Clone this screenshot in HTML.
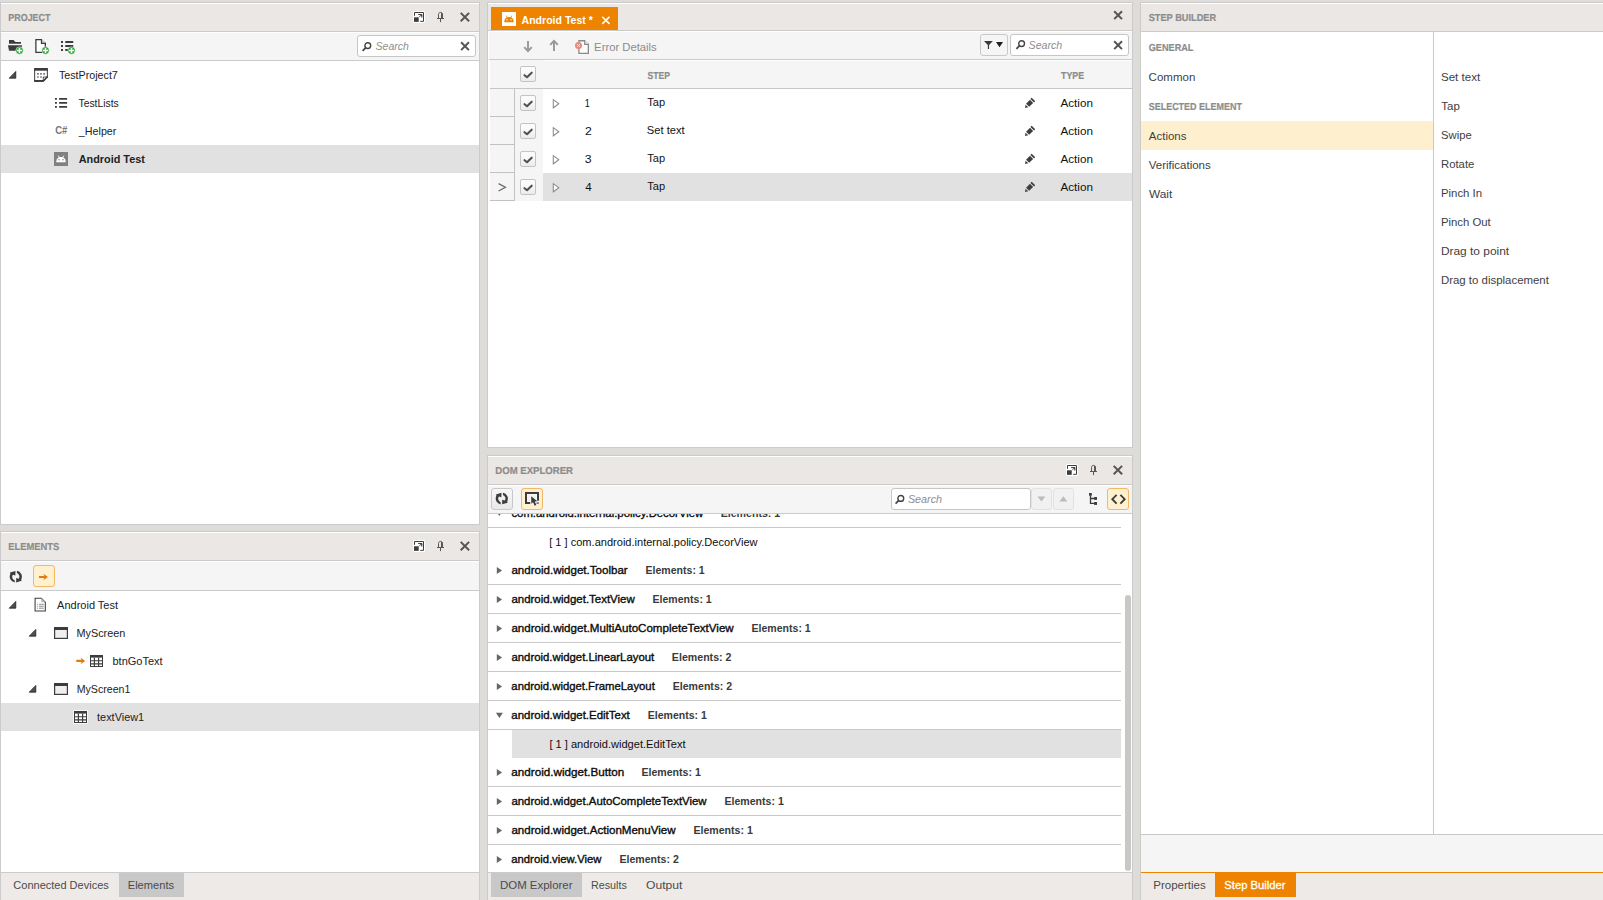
<!DOCTYPE html>
<html lang="en"><head><meta charset="utf-8"><title>Test Studio - Android Test</title>
<style>
html,body{margin:0;padding:0}
body{width:1603px;height:900px;overflow:hidden;position:relative;background:#dedcd8;font-family:"Liberation Sans", sans-serif;font-size:11px;color:#222}
div,svg,span.t{position:absolute;box-sizing:border-box}
span.t{white-space:pre;line-height:14px;transform-origin:0 50%;display:block}
.panel{background:#fff;border:1px solid #cbcbcb}
.hdr{background:#ebe7e4;border-top:1px solid #fff;border-bottom:1px solid #cbcbcb}
.tb{background:#f5f5f5;border-top:1px solid #fff;border-bottom:1px solid #cbcbcb}
.sel{background:#e1e1e1}
.search{background:#fff;border:1px solid #c6c6c6;border-radius:3px}
.btn{border:1px solid #c8c8c8;border-radius:3px;background:linear-gradient(#f7f7f7,#e9e9e9)}
.btno{border:1px solid #f3b765;border-radius:3px;background:#fff0cf}
.cb{border:1px solid #c4c4c4;border-radius:2px;background:linear-gradient(#fbfbfb 30%,#ebebeb)}
.ln{background:#cbcbcb}
</style></head>
<body>
<div class="panel" style="left:0px;top:2px;width:480px;height:523px;"></div>
<div class="hdr" style="left:1px;top:3px;width:478px;height:29px;"></div>
<span class="t" style="font-size:10.2px;font-weight:bold;color:#8c8c8c;text-rendering:geometricPrecision;-webkit-text-stroke:0.2px #8c8c8c;left:8px;top:12.25px;transform:translateX(0.37px) scaleX(0.8729);">PROJECT</span>
<svg style="left:413px;top:11px;" width="12" height="12" viewBox="0.000 0.000 12.000 12.000" preserveAspectRatio="none"><rect x="0" y="0" width="12" height="12" rx="1.6" fill="#fff"/><path d="M1.5 4.8V1.5H10.5V10.35H7.2" fill="none" stroke="#3c3c3c" stroke-width="1"/><rect x="1" y="6.3" width="4.7" height="4.55" fill="#3c3c3c"/><path d="M5.1 3.55H8.8V6.6" fill="none" stroke="#3c3c3c" stroke-width="1"/><path d="M6.5 3.2H9.1V5.8Z" fill="#3c3c3c"/><path d="M8.4 3.9L6 6.3" stroke="#555" stroke-width="0.9"/></svg>
<svg style="left:436px;top:11px;" width="9" height="12" viewBox="-0.500 -0.500 9.000 12.000" preserveAspectRatio="none"><path d="M2 7V3.2C2 1.6 2.9 0.85 4 0.85C5.1 0.85 6 1.6 6 3.2V7" fill="none" stroke="#585858" stroke-width="1"/><path d="M4.5 0.9C5.7 1.1 6.5 1.9 6.5 3.2V7H4.5Z" fill="#585858"/><path d="M0.5 7H7.5M4 7V10.6" fill="none" stroke="#585858" stroke-width="1"/></svg>
<svg style="left:460px;top:12px;" width="10" height="10" viewBox="0.000 -0.200 10.000 10.000" preserveAspectRatio="none"><path d="M0.7 0.7L9.100000000000001 9.100000000000001M9.100000000000001 0.7L0.7 9.100000000000001" stroke="#555" stroke-width="2.0" fill="none"/></svg>
<div class="tb" style="left:1px;top:32px;width:478px;height:29px;"></div>
<svg style="left:8px;top:39px;" width="16" height="16" viewBox="0.000 0.000 16.000 16.000" preserveAspectRatio="none"><path d="M1 1H5.5L7.5 3H13V4.75H1Z" fill="#3c3c3c"/><path d="M0 6.25H14L13 11.8H1Z" fill="#3c3c3c"/><circle cx="11.5" cy="11.5" r="3.7" fill="#2aa838" stroke="#f5f5f5" stroke-width="0.5"/><path d="M8.9 11.5H14.1M11.5 8.9V14.1" stroke="#fff" stroke-width="1.5"/></svg>
<svg style="left:34px;top:38px;" width="17" height="17" viewBox="0.000 0.000 17.000 17.000" preserveAspectRatio="none"><path d="M1.9 1.65H7.5V5.25H11.35V14.35H1.9Z" fill="#fff" stroke="#3c3c3c" stroke-width="1.3"/><path d="M8.15 1.4L11.8 4.6H8.15Z" fill="#c2c2c2"/><circle cx="11.5" cy="12.5" r="3.7" fill="#2aa838" stroke="#f5f5f5" stroke-width="0.5"/><path d="M8.9 12.5H14.1M11.5 9.9V15.1" stroke="#fff" stroke-width="1.5"/></svg>
<svg style="left:61px;top:40px;" width="16" height="16" viewBox="0.000 0.000 16.000 16.000" preserveAspectRatio="none"><path d="M0 2H2M0 6H2M0 10H2" stroke="#3c3c3c" stroke-width="1.9"/><path d="M4.25 2H12.25M4.25 6H12.25M4.25 10H9" stroke="#3c3c3c" stroke-width="1.9"/><circle cx="10.5" cy="10.5" r="3.7" fill="#2aa838" stroke="#f5f5f5" stroke-width="0.5"/><path d="M7.9 10.5H13.1M10.5 7.9V13.1" stroke="#fff" stroke-width="1.5"/></svg>
<div class="search" style="left:357px;top:35px;width:119px;height:22px;"></div>
<svg style="left:361px;top:41px;" width="11" height="11" viewBox="-0.900 -0.900 11.000 11.000" preserveAspectRatio="none"><circle cx="5.9" cy="3.7" r="2.9" fill="none" stroke="#444" stroke-width="1.4"/><path d="M3.9 5.7L0.7 8.9" stroke="#444" stroke-width="1.7"/></svg>
<span class="t" style="font-size:11.5px;font-weight:normal;color:#8e8e8e;font-style:italic;left:375px;top:39.25px;transform:translateX(0.62px) scaleX(0.9119);">Search</span>
<svg style="left:460px;top:41px;" width="10" height="10" viewBox="-0.400 -0.600 10.000 10.000" preserveAspectRatio="none"><path d="M0.7 0.7L8.5 8.5M8.5 0.7L0.7 8.5" stroke="#555" stroke-width="2.0" fill="none"/></svg>
<svg style="left:8px;top:70px;" width="9" height="9" viewBox="-0.600 -0.900 9.000 9.000" preserveAspectRatio="none"><path d="M7.2 0.5V7.3H0.6Z" fill="#4e4e4e" stroke="#161616" stroke-width="0.7" stroke-linejoin="miter"/></svg>
<svg style="left:34px;top:68px;" width="14" height="14" viewBox="0.000 0.000 14.000 14.000" preserveAspectRatio="none"><path d="M0.65 1H13.35V8.6L8.9 13.1H0.65Z" fill="#fff" stroke="#3c3c3c" stroke-width="1"/><rect x="0.15" y="0" width="13.7" height="2.7" fill="#3c3c3c"/><rect x="0.15" y="12" width="9" height="1.9" fill="#3c3c3c"/><path d="M9.3 13.2V9H13.4Z" fill="#fff" stroke="#3c3c3c" stroke-width="0.9"/><path d="M8.9 13.5L13.7 8.6" stroke="#3c3c3c" stroke-width="1.5"/><path d="M3.1 5.9H4.7M6.2 5.9H7.8M9.3 5.9H10.9M3.1 9H4.7M6.2 9H7.8" stroke="#6e6e6e" stroke-width="1.6"/></svg>
<span class="t" style="font-size:11px;font-weight:normal;color:#222;left:58px;top:68.25px;transform:translateX(0.92px) scaleX(0.9730);">TestProject7</span>
<svg style="left:55px;top:97px;" width="13" height="12" viewBox="0.000 -0.900 13.000 12.000" preserveAspectRatio="none"><path d="M0 1H1.9M0 5H1.9M0 9H1.9" stroke="#3c3c3c" stroke-width="1.9"/><path d="M4.1 1H12.1M4.1 5H12.1M4.1 9H12.1" stroke="#3c3c3c" stroke-width="1.9"/></svg>
<span class="t" style="font-size:11px;font-weight:normal;color:#222;left:78px;top:96.25px;transform:translateX(0.46px) scaleX(0.9404);">TestLists</span>
<span class="t" style="font-size:10px;font-weight:bold;color:#777;left:55px;top:124.25px;transform:translateX(0.16px) scaleX(0.9472);">C#</span>
<span class="t" style="font-size:11px;font-weight:normal;color:#222;left:78px;top:124.25px;transform:translateX(0.81px) scaleX(0.9757);">_Helper</span>
<div class="sel" style="left:1px;top:145px;width:478px;height:28px;"></div>
<svg style="left:54px;top:152px;" width="14" height="14" viewBox="0.000 0.000 14.000 14.000" preserveAspectRatio="none"><rect width="14" height="14" fill="#808080"/><path d="M2.2 10.2C2.2 6.8 4.3 5.1 7 5.1C9.7 5.1 11.8 6.8 11.8 10.2Z" fill="#fff"/><path d="M4.2 3.6L5.5 6M9.8 3.6L8.5 6" stroke="#fff" stroke-width="0.9"/><circle cx="5" cy="7.8" r="0.75" fill="#808080"/><circle cx="9" cy="7.8" r="0.75" fill="#808080"/></svg>
<span class="t" style="font-size:11px;font-weight:bold;color:#222;left:78px;top:152.25px;transform:translateX(0.77px) scaleX(0.9858);">Android Test</span>
<div class="panel" style="left:0px;top:531px;width:480px;height:372px;"></div>
<div class="hdr" style="left:1px;top:532px;width:478px;height:29px;"></div>
<span class="t" style="font-size:10.2px;font-weight:bold;color:#8c8c8c;text-rendering:geometricPrecision;-webkit-text-stroke:0.2px #8c8c8c;left:8px;top:541.25px;transform:translateX(0.34px) scaleX(0.9193);">ELEMENTS</span>
<svg style="left:413px;top:540px;" width="12" height="12" viewBox="0.000 0.000 12.000 12.000" preserveAspectRatio="none"><rect x="0" y="0" width="12" height="12" rx="1.6" fill="#fff"/><path d="M1.5 4.8V1.5H10.5V10.35H7.2" fill="none" stroke="#3c3c3c" stroke-width="1"/><rect x="1" y="6.3" width="4.7" height="4.55" fill="#3c3c3c"/><path d="M5.1 3.55H8.8V6.6" fill="none" stroke="#3c3c3c" stroke-width="1"/><path d="M6.5 3.2H9.1V5.8Z" fill="#3c3c3c"/><path d="M8.4 3.9L6 6.3" stroke="#555" stroke-width="0.9"/></svg>
<svg style="left:436px;top:540px;" width="9" height="12" viewBox="-0.500 -0.500 9.000 12.000" preserveAspectRatio="none"><path d="M2 7V3.2C2 1.6 2.9 0.85 4 0.85C5.1 0.85 6 1.6 6 3.2V7" fill="none" stroke="#585858" stroke-width="1"/><path d="M4.5 0.9C5.7 1.1 6.5 1.9 6.5 3.2V7H4.5Z" fill="#585858"/><path d="M0.5 7H7.5M4 7V10.6" fill="none" stroke="#585858" stroke-width="1"/></svg>
<svg style="left:460px;top:541px;" width="10" height="10" viewBox="0.000 -0.200 10.000 10.000" preserveAspectRatio="none"><path d="M0.7 0.7L9.100000000000001 9.100000000000001M9.100000000000001 0.7L0.7 9.100000000000001" stroke="#555" stroke-width="2.0" fill="none"/></svg>
<div class="tb" style="left:1px;top:561px;width:478px;height:30px;"></div>
<svg style="left:9px;top:570px;" width="14" height="13" viewBox="-0.624 -0.520 14.560 13.520" preserveAspectRatio="none"><path d="M5.3 12.5A6.2 6.2 0 0 1 0.8 3.6L0.4 2.1L6.1 0.4L6 5.1L3.4 4.3A3.9 3.9 0 0 0 5.3 10.2Z" fill="#3c3c3c"/><path d="M5.3 12.5A6.2 6.2 0 0 1 0.8 3.6L0.4 2.1L6.1 0.4L6 5.1L3.4 4.3A3.9 3.9 0 0 0 5.3 10.2Z" fill="#3c3c3c" transform="rotate(180 6.45 6.4)"/></svg>
<div class="btno" style="left:33px;top:565px;width:22px;height:22px;"></div>
<svg style="left:38px;top:573px;" width="11" height="8" viewBox="-0.700 -0.500 11.000 8.000" preserveAspectRatio="none"><path d="M4.6 0.2L9.2 3.5L4.6 6.8L5.6 4.6H0.3V2.4H5.6Z" fill="#e8780c"/></svg>
<svg style="left:8px;top:600px;" width="9" height="9" viewBox="-0.600 -0.900 9.000 9.000" preserveAspectRatio="none"><path d="M7.2 0.5V7.3H0.6Z" fill="#4e4e4e" stroke="#161616" stroke-width="0.7" stroke-linejoin="miter"/></svg>
<svg style="left:34px;top:597px;" width="13" height="16" viewBox="-0.517 -0.616 13.448 16.438" preserveAspectRatio="none"><path d="M0.6 0.6H7L11.2 4.8V13.8H0.6Z" fill="#fff" stroke="#3c3c3c" stroke-width="1.1"/><path d="M7 0.6V4.8H11.2Z" fill="#bdbdbd"/><path d="M4.6 6.9H9.6M4.6 8.9H9.6M4.6 10.9H9.6" stroke="#8a8a8a" stroke-width="1"/><path d="M2.5 6.9H3.5M2.5 8.9H3.5M2.5 10.9H3.5" stroke="#8a8a8a" stroke-width="1"/></svg>
<span class="t" style="font-size:11px;font-weight:normal;color:#222;left:57.10px;top:598.25px;">Android Test</span>
<svg style="left:28px;top:628px;" width="9" height="9" viewBox="-0.600 -0.900 9.000 9.000" preserveAspectRatio="none"><path d="M7.2 0.5V7.3H0.6Z" fill="#4e4e4e" stroke="#161616" stroke-width="0.7" stroke-linejoin="miter"/></svg>
<svg style="left:54px;top:627px;" width="14" height="12" viewBox="0.000 0.000 14.000 12.000" preserveAspectRatio="none"><rect x="0.6" y="0.6" width="12.8" height="10.8" fill="#efeff1" stroke="#3c3c3c" stroke-width="1.2"/><rect x="0" y="0" width="14" height="3" fill="#3c3c3c"/></svg>
<span class="t" style="font-size:11px;font-weight:normal;color:#222;left:76px;top:626.25px;transform:translateX(0.52px) scaleX(0.9851);">MyScreen</span>
<svg style="left:76px;top:657px;" width="10" height="8" viewBox="0.000 -0.400 10.000 8.000" preserveAspectRatio="none"><path d="M4.6 0.2L9.2 3.5L4.6 6.8L5.6 4.6H0.3V2.4H5.6Z" fill="#e8780c"/></svg>
<svg style="left:89px;top:654px;" width="15" height="14" viewBox="-1.000 -1.000 15.000 14.000" preserveAspectRatio="none"><rect x="0.5" y="0.5" width="12" height="11" fill="#fff" stroke="#3c3c3c" stroke-width="1"/><rect x="0" y="0" width="13" height="2.6" fill="#3c3c3c"/><path d="M0.5 5.7H12.5M0.5 8.8H12.5M4.4 2.6V11.5M8.6 2.6V11.5" stroke="#3c3c3c" stroke-width="1.15"/></svg>
<span class="t" style="font-size:11px;font-weight:normal;color:#222;left:112.49px;top:654.25px;">btnGoText</span>
<svg style="left:28px;top:684px;" width="9" height="9" viewBox="-0.600 -0.900 9.000 9.000" preserveAspectRatio="none"><path d="M7.2 0.5V7.3H0.6Z" fill="#4e4e4e" stroke="#161616" stroke-width="0.7" stroke-linejoin="miter"/></svg>
<svg style="left:54px;top:683px;" width="14" height="12" viewBox="0.000 0.000 14.000 12.000" preserveAspectRatio="none"><rect x="0.6" y="0.6" width="12.8" height="10.8" fill="#efeff1" stroke="#3c3c3c" stroke-width="1.2"/><rect x="0" y="0" width="14" height="3" fill="#3c3c3c"/></svg>
<span class="t" style="font-size:11px;font-weight:normal;color:#222;left:76px;top:682.25px;transform:translateX(0.68px) scaleX(0.9650);">MyScreen1</span>
<div class="sel" style="left:1px;top:703px;width:478px;height:28px;"></div>
<svg style="left:73px;top:710px;" width="15" height="14" viewBox="-1.000 -1.000 15.000 14.000" preserveAspectRatio="none"><rect x="-0.7" y="-0.7" width="14.4" height="13.4" rx="1" fill="#fff"/><rect x="0.5" y="0.5" width="12" height="11" fill="#fff" stroke="#3c3c3c" stroke-width="1"/><rect x="0" y="0" width="13" height="2.6" fill="#3c3c3c"/><path d="M0.5 5.7H12.5M0.5 8.8H12.5M4.4 2.6V11.5M8.6 2.6V11.5" stroke="#3c3c3c" stroke-width="1.15"/></svg>
<span class="t" style="font-size:11px;font-weight:normal;color:#222;left:97px;top:710.25px;transform:translateX(0.05px) scaleX(0.9918);">textView1</span>
<div class="ln" style="left:1px;top:872px;width:478px;height:1px;"></div>
<div style="left:1px;top:873px;width:478px;height:27px;background:#eeeae7"></div>
<div style="left:119px;top:873px;width:65px;height:24px;background:#c8c8c8"></div>
<span class="t" style="font-size:11px;font-weight:normal;color:#4a4a4a;left:13.36px;top:878.25px;">Connected Devices</span>
<span class="t" style="font-size:11px;font-weight:normal;color:#4a4a4a;left:127px;top:878.25px;transform:translateX(0.73px) scaleX(1.0107);">Elements</span>
<div class="panel" style="left:487px;top:2px;width:646px;height:446px;"></div>
<div style="left:488px;top:3px;width:644px;height:28px;background:#ebe7e4;border-top:1px solid #fff;border-bottom:1px solid #cbcbcb"></div>
<div style="left:491px;top:7px;width:127px;height:23px;background:#ee8300"></div>
<svg style="left:502px;top:12px;" width="14" height="14" viewBox="0.000 0.000 14.000 14.000" preserveAspectRatio="none"><rect width="14" height="14" fill="#fff"/><path d="M2.2 10.2C2.2 6.8 4.3 5.1 7 5.1C9.7 5.1 11.8 6.8 11.8 10.2Z" fill="#ee8300"/><path d="M4.2 3.6L5.5 6M9.8 3.6L8.5 6" stroke="#ee8300" stroke-width="0.9"/><circle cx="5" cy="7.8" r="0.75" fill="#fff"/><circle cx="9" cy="7.8" r="0.75" fill="#fff"/></svg>
<span class="t" style="font-size:11px;font-weight:bold;color:#fff;left:521px;top:13.25px;transform:translateX(0.53px) scaleX(0.9588);">Android Test *</span>
<svg style="left:601px;top:16px;" width="10" height="9" viewBox="-0.600 0.000 10.000 9.000" preserveAspectRatio="none"><path d="M0.7 0.7L7.8999999999999995 7.8999999999999995M7.8999999999999995 0.7L0.7 7.8999999999999995" stroke="#fff" stroke-width="1.6" fill="none"/></svg>
<svg style="left:1113px;top:10px;" width="10" height="10" viewBox="-0.500 -0.600 10.000 10.000" preserveAspectRatio="none"><path d="M0.7 0.7L8.5 8.5M8.5 0.7L0.7 8.5" stroke="#555" stroke-width="2.0" fill="none"/></svg>
<div class="tb" style="left:489px;top:31px;width:643px;height:29px;"></div>
<svg style="left:523px;top:40px;" width="10" height="13" viewBox="-0.500 -0.800 10.000 13.000" preserveAspectRatio="none"><path d="M4.5 0.2V10M0.7 6.3L4.5 10.3L8.3 6.3" fill="none" stroke="#989898" stroke-width="1.9"/></svg>
<svg style="left:549px;top:39px;" width="10" height="13" viewBox="-0.600 -0.800 10.000 13.000" preserveAspectRatio="none"><path d="M4.4 11.2V1M0.6 5L4.4 1L8.2 5" fill="none" stroke="#989898" stroke-width="1.9"/></svg>
<svg style="left:575px;top:40px;" width="15" height="15" viewBox="0.000 0.000 15.000 15.000" preserveAspectRatio="none"><path d="M3.9 0.75H9.75V4.25H13.35V13.35H3.9Z" fill="#fcfcfc" stroke="#8a8a8a" stroke-width="1.3"/><path d="M10.4 0.6L13.9 3.7H10.4Z" fill="#d2d2d2"/><circle cx="3.5" cy="5.5" r="3.5" fill="#e28b80"/><path d="M2.2 4.2L4.8 6.8M4.8 4.2L2.2 6.8" stroke="#fbeeee" stroke-width="1"/></svg>
<span class="t" style="font-size:11px;font-weight:normal;color:#8c8c8c;left:594px;top:40.25px;transform:translateX(0.11px) scaleX(1.0247);">Error Details</span>
<div style="left:980px;top:34px;width:28px;height:22px;border:1px solid #c8c8c8;border-radius:3px;background:#f5f5f5"></div>
<svg style="left:984px;top:41px;" width="9" height="9" viewBox="0.000 0.000 9.000 9.000" preserveAspectRatio="none"><path d="M0 0H8.9L5.05 3.9V8H3.85V3.9Z" fill="#3a3a3a"/></svg>
<svg style="left:996px;top:42px;" width="7" height="6" viewBox="0.000 0.000 7.000 6.000" preserveAspectRatio="none"><path d="M0 0H7L3.5 5.2Z" fill="#1e1e1e"/></svg>
<div class="search" style="left:1010px;top:34px;width:119px;height:22px;"></div>
<svg style="left:1015px;top:39px;" width="11" height="11" viewBox="-0.700 -0.900 11.000 11.000" preserveAspectRatio="none"><circle cx="5.9" cy="3.7" r="2.9" fill="none" stroke="#444" stroke-width="1.4"/><path d="M3.9 5.7L0.7 8.9" stroke="#444" stroke-width="1.7"/></svg>
<span class="t" style="font-size:11.5px;font-weight:normal;color:#8e8e8e;font-style:italic;left:1028px;top:38.25px;transform:translateX(0.58px) scaleX(0.9204);">Search</span>
<svg style="left:1113px;top:40px;" width="10" height="10" viewBox="-0.500 -0.600 10.000 10.000" preserveAspectRatio="none"><path d="M0.7 0.7L8.5 8.5M8.5 0.7L0.7 8.5" stroke="#555" stroke-width="2.0" fill="none"/></svg>
<div style="left:490px;top:60px;width:642px;height:29px;background:#f5f5f5;border-bottom:1px solid #c6c6c6"></div>
<div style="left:543px;top:60px;width:589px;height:1px;background:#fff"></div>
<div class="cb" style="left:520px;top:66px;width:16px;height:16px;"></div>
<svg style="left:520px;top:66px;" width="16" height="16" viewBox="0.000 0.000 16.000 16.000" preserveAspectRatio="none"><path d="M4.5 9.2L7 11.2L11.7 6.7" fill="none" stroke="#505050" stroke-width="2.1" stroke-linecap="round" stroke-linejoin="round"/></svg>
<span class="t" style="font-size:10.2px;font-weight:bold;color:#8c8c8c;text-rendering:geometricPrecision;-webkit-text-stroke:0.2px #8c8c8c;left:647px;top:70.25px;transform:translateX(0.50px) scaleX(0.8413);">STEP</span>
<span class="t" style="font-size:10.2px;font-weight:bold;color:#8c8c8c;text-rendering:geometricPrecision;-webkit-text-stroke:0.2px #8c8c8c;left:1061px;top:70.25px;transform:translateX(0.12px) scaleX(0.8595);">TYPE</span>
<div style="left:490px;top:89px;width:25px;height:28px;background:#f5f5f5;border-right:1px solid #c2c2c2;border-bottom:1px solid #c2c2c2"></div>
<div style="left:515px;top:89px;width:28px;height:28px;background:#f5f5f5"></div>
<div class="cb" style="left:520px;top:95px;width:16px;height:16px;"></div>
<svg style="left:520px;top:95px;" width="16" height="16" viewBox="0.000 0.000 16.000 16.000" preserveAspectRatio="none"><path d="M4.5 9.2L7 11.2L11.7 6.7" fill="none" stroke="#505050" stroke-width="2.1" stroke-linecap="round" stroke-linejoin="round"/></svg>
<svg style="left:552px;top:98px;" width="8" height="11" viewBox="-0.600 -0.700 8.000 11.000" preserveAspectRatio="none"><path d="M0.7 0.9L6.2 5L0.7 9.1Z" fill="#fff" stroke="#909090" stroke-width="1.1"/></svg>
<span class="t" style="font-size:11px;font-weight:normal;color:#111;left:584px;top:96.25px;transform:translateX(0.74px) scaleX(0.8324);">1</span>
<span class="t" style="font-size:11px;font-weight:normal;color:#111;left:647px;top:95.25px;transform:translateX(0.23px) scaleX(1.0067);">Tap</span>
<svg style="left:1024px;top:96px;" width="13" height="13" viewBox="0.000 0.000 13.000 13.000" preserveAspectRatio="none"><g transform="translate(1 11.9) rotate(-45)" fill="#3e3e3e"><path d="M0 0L2.7 -1.9V1.9Z"/><rect x="3.7" y="-2.2" width="5.6" height="4.4"/><rect x="10.2" y="-2.6" width="1.8" height="5.2" rx="0.8"/></g></svg>
<span class="t" style="font-size:11px;font-weight:normal;color:#111;left:1060px;top:96.25px;transform:translateX(0.48px) scaleX(1.0616);">Action</span>
<div style="left:490px;top:117px;width:25px;height:28px;background:#f5f5f5;border-right:1px solid #c2c2c2;border-bottom:1px solid #c2c2c2"></div>
<div style="left:515px;top:117px;width:28px;height:28px;background:#f5f5f5"></div>
<div class="cb" style="left:520px;top:123px;width:16px;height:16px;"></div>
<svg style="left:520px;top:123px;" width="16" height="16" viewBox="0.000 0.000 16.000 16.000" preserveAspectRatio="none"><path d="M4.5 9.2L7 11.2L11.7 6.7" fill="none" stroke="#505050" stroke-width="2.1" stroke-linecap="round" stroke-linejoin="round"/></svg>
<svg style="left:552px;top:126px;" width="8" height="11" viewBox="-0.600 -0.700 8.000 11.000" preserveAspectRatio="none"><path d="M0.7 0.9L6.2 5L0.7 9.1Z" fill="#fff" stroke="#909090" stroke-width="1.1"/></svg>
<span class="t" style="font-size:11px;font-weight:normal;color:#111;left:585px;top:124.25px;transform:translateX(0.02px) scaleX(1.1094);">2</span>
<span class="t" style="font-size:11px;font-weight:normal;color:#111;left:646px;top:123.25px;transform:translateX(0.78px) scaleX(1.0163);">Set text</span>
<svg style="left:1024px;top:124px;" width="13" height="13" viewBox="0.000 0.000 13.000 13.000" preserveAspectRatio="none"><g transform="translate(1 11.9) rotate(-45)" fill="#3e3e3e"><path d="M0 0L2.7 -1.9V1.9Z"/><rect x="3.7" y="-2.2" width="5.6" height="4.4"/><rect x="10.2" y="-2.6" width="1.8" height="5.2" rx="0.8"/></g></svg>
<span class="t" style="font-size:11px;font-weight:normal;color:#111;left:1060px;top:124.25px;transform:translateX(0.48px) scaleX(1.0616);">Action</span>
<div style="left:490px;top:145px;width:25px;height:28px;background:#f5f5f5;border-right:1px solid #c2c2c2;border-bottom:1px solid #c2c2c2"></div>
<div style="left:515px;top:145px;width:28px;height:28px;background:#f5f5f5"></div>
<div class="cb" style="left:520px;top:151px;width:16px;height:16px;"></div>
<svg style="left:520px;top:151px;" width="16" height="16" viewBox="0.000 0.000 16.000 16.000" preserveAspectRatio="none"><path d="M4.5 9.2L7 11.2L11.7 6.7" fill="none" stroke="#505050" stroke-width="2.1" stroke-linecap="round" stroke-linejoin="round"/></svg>
<svg style="left:552px;top:154px;" width="8" height="11" viewBox="-0.600 -0.700 8.000 11.000" preserveAspectRatio="none"><path d="M0.7 0.9L6.2 5L0.7 9.1Z" fill="#fff" stroke="#909090" stroke-width="1.1"/></svg>
<span class="t" style="font-size:11px;font-weight:normal;color:#111;left:584px;top:152.25px;transform:translateX(0.77px) scaleX(1.1141);">3</span>
<span class="t" style="font-size:11px;font-weight:normal;color:#111;left:647px;top:151.25px;transform:translateX(0.23px) scaleX(1.0067);">Tap</span>
<svg style="left:1024px;top:152px;" width="13" height="13" viewBox="0.000 0.000 13.000 13.000" preserveAspectRatio="none"><g transform="translate(1 11.9) rotate(-45)" fill="#3e3e3e"><path d="M0 0L2.7 -1.9V1.9Z"/><rect x="3.7" y="-2.2" width="5.6" height="4.4"/><rect x="10.2" y="-2.6" width="1.8" height="5.2" rx="0.8"/></g></svg>
<span class="t" style="font-size:11px;font-weight:normal;color:#111;left:1060px;top:152.25px;transform:translateX(0.48px) scaleX(1.0616);">Action</span>
<div class="sel" style="left:543px;top:173px;width:589px;height:28px;"></div>
<div style="left:490px;top:173px;width:25px;height:28px;background:#f5f5f5;border-right:1px solid #c2c2c2;border-bottom:1px solid #c2c2c2"></div>
<div style="left:515px;top:173px;width:28px;height:28px;background:#f5f5f5"></div>
<div class="cb" style="left:520px;top:179px;width:16px;height:16px;"></div>
<svg style="left:520px;top:179px;" width="16" height="16" viewBox="0.000 0.000 16.000 16.000" preserveAspectRatio="none"><path d="M4.5 9.2L7 11.2L11.7 6.7" fill="none" stroke="#505050" stroke-width="2.1" stroke-linecap="round" stroke-linejoin="round"/></svg>
<svg style="left:552px;top:182px;" width="8" height="11" viewBox="-0.600 -0.700 8.000 11.000" preserveAspectRatio="none"><path d="M0.7 0.9L6.2 5L0.7 9.1Z" fill="#fff" stroke="#909090" stroke-width="1.1"/></svg>
<span class="t" style="font-size:11px;font-weight:normal;color:#111;left:585px;top:180.25px;transform:translateX(0.22px) scaleX(1.0560);">4</span>
<span class="t" style="font-size:11px;font-weight:normal;color:#111;left:647px;top:179.25px;transform:translateX(0.23px) scaleX(1.0067);">Tap</span>
<svg style="left:1024px;top:180px;" width="13" height="13" viewBox="0.000 0.000 13.000 13.000" preserveAspectRatio="none"><g transform="translate(1 11.9) rotate(-45)" fill="#3e3e3e"><path d="M0 0L2.7 -1.9V1.9Z"/><rect x="3.7" y="-2.2" width="5.6" height="4.4"/><rect x="10.2" y="-2.6" width="1.8" height="5.2" rx="0.8"/></g></svg>
<span class="t" style="font-size:11px;font-weight:normal;color:#111;left:1060px;top:180.25px;transform:translateX(0.48px) scaleX(1.0616);">Action</span>
<svg style="left:498px;top:183px;" width="9" height="9" viewBox="0.000 0.000 9.000 9.000" preserveAspectRatio="none"><path d="M0.6 0.6L7.4 4.3L0.6 8" fill="none" stroke="#6a6a6a" stroke-width="1.3"/></svg>
<div class="panel" style="left:487px;top:455px;width:646px;height:448px;"></div>
<div class="hdr" style="left:488px;top:456px;width:644px;height:29px;"></div>
<span class="t" style="font-size:10.2px;font-weight:bold;color:#8c8c8c;text-rendering:geometricPrecision;-webkit-text-stroke:0.2px #8c8c8c;left:495px;top:465.25px;transform:translateX(0.32px) scaleX(0.9405);">DOM EXPLORER</span>
<svg style="left:1066px;top:464px;" width="12" height="12" viewBox="0.000 0.000 12.000 12.000" preserveAspectRatio="none"><rect x="0" y="0" width="12" height="12" rx="1.6" fill="#fff"/><path d="M1.5 4.8V1.5H10.5V10.35H7.2" fill="none" stroke="#3c3c3c" stroke-width="1"/><rect x="1" y="6.3" width="4.7" height="4.55" fill="#3c3c3c"/><path d="M5.1 3.55H8.8V6.6" fill="none" stroke="#3c3c3c" stroke-width="1"/><path d="M6.5 3.2H9.1V5.8Z" fill="#3c3c3c"/><path d="M8.4 3.9L6 6.3" stroke="#555" stroke-width="0.9"/></svg>
<svg style="left:1089px;top:464px;" width="9" height="12" viewBox="-0.500 -0.500 9.000 12.000" preserveAspectRatio="none"><path d="M2 7V3.2C2 1.6 2.9 0.85 4 0.85C5.1 0.85 6 1.6 6 3.2V7" fill="none" stroke="#585858" stroke-width="1"/><path d="M4.5 0.9C5.7 1.1 6.5 1.9 6.5 3.2V7H4.5Z" fill="#585858"/><path d="M0.5 7H7.5M4 7V10.6" fill="none" stroke="#585858" stroke-width="1"/></svg>
<svg style="left:1113px;top:465px;" width="10" height="10" viewBox="0.000 -0.200 10.000 10.000" preserveAspectRatio="none"><path d="M0.7 0.7L9.100000000000001 9.100000000000001M9.100000000000001 0.7L0.7 9.100000000000001" stroke="#555" stroke-width="2.0" fill="none"/></svg>
<div class="tb" style="left:488px;top:485px;width:644px;height:29px;"></div>
<div class="btn" style="left:491px;top:488px;width:22px;height:22px;"></div>
<svg style="left:495px;top:492px;" width="14" height="13" viewBox="-0.624 -0.416 14.560 13.520" preserveAspectRatio="none"><path d="M5.3 12.5A6.2 6.2 0 0 1 0.8 3.6L0.4 2.1L6.1 0.4L6 5.1L3.4 4.3A3.9 3.9 0 0 0 5.3 10.2Z" fill="#3c3c3c"/><path d="M5.3 12.5A6.2 6.2 0 0 1 0.8 3.6L0.4 2.1L6.1 0.4L6 5.1L3.4 4.3A3.9 3.9 0 0 0 5.3 10.2Z" fill="#3c3c3c" transform="rotate(180 6.45 6.4)"/></svg>
<div class="btno" style="left:521px;top:488px;width:22px;height:22px;"></div>
<svg style="left:524px;top:491px;" width="16" height="16" viewBox="0.000 0.000 16.000 16.000" preserveAspectRatio="none"><rect x="3" y="3" width="10" height="8" fill="#f1f1f1" stroke="#fff" stroke-width="1"/><path d="M6.3 12H2V2H14V9.7" fill="none" stroke="#3c3c3c" stroke-width="2"/><path d="M12.4 12.1H14.8" stroke="#3c3c3c" stroke-width="1.2"/><path d="M7.2 5.2V12.8L9 11.2L10.7 14.8L12.4 14L10.8 10.5L13.4 10.3Z" fill="#3c3c3c" stroke="#fff" stroke-width="0.9" paint-order="stroke"/></svg>
<div class="search" style="left:891px;top:488px;width:140px;height:22px;"></div>
<svg style="left:894px;top:494px;" width="11" height="11" viewBox="-0.900 -0.700 11.000 11.000" preserveAspectRatio="none"><circle cx="5.9" cy="3.7" r="2.9" fill="none" stroke="#444" stroke-width="1.4"/><path d="M3.9 5.7L0.7 8.9" stroke="#444" stroke-width="1.7"/></svg>
<span class="t" style="font-size:11.5px;font-weight:normal;color:#8e8e8e;font-style:italic;left:907px;top:492.25px;transform:translateX(0.88px) scaleX(0.9388);">Search</span>
<div style="left:1031px;top:488px;width:21px;height:22px;border:1px solid #e2e2e2;border-radius:3px;background:#f1f1f1"></div>
<svg style="left:1037px;top:496px;" width="9" height="6" viewBox="-0.400 -0.400 9.000 6.000" preserveAspectRatio="none"><path d="M0 0H8L4 5.2Z" fill="#bcbcbc"/></svg>
<div style="left:1053px;top:488px;width:21px;height:22px;border:1px solid #e2e2e2;border-radius:3px;background:#f1f1f1"></div>
<svg style="left:1059px;top:496px;" width="9" height="6" viewBox="-0.400 -0.200 9.000 6.000" preserveAspectRatio="none"><path d="M0 5.2H8L4 0Z" fill="#bcbcbc"/></svg>
<svg style="left:1088px;top:492px;" width="10" height="14" viewBox="0.000 -0.800 10.000 14.000" preserveAspectRatio="none"><rect x="1" y="0.2" width="2.8" height="2.7" fill="#3c3c3c"/><path d="M2.5 2.6V10.6H6.4M2.5 5.7H6.4" fill="none" stroke="#3c3c3c" stroke-width="1.3"/><rect x="6.1" y="4.2" width="2.9" height="2.9" fill="#3c3c3c"/><rect x="6.1" y="9.2" width="2.9" height="2.9" fill="#3c3c3c"/></svg>
<div class="btno" style="left:1107px;top:488px;width:22px;height:22px;"></div>
<svg style="left:1111px;top:494px;" width="15" height="11" viewBox="-0.400 -0.200 15.000 11.000" preserveAspectRatio="none"><path d="M5.2 0.6L0.9 5L5.2 9.4M9 0.6L13.3 5L9 9.4" fill="none" stroke="#3c3c3c" stroke-width="1.85"/></svg>
<div style="left:488px;top:514px;width:640px;height:14px;overflow:hidden">
<svg style="left:7px;top:-4px;" width="8" height="7" viewBox="-0.900 -0.800 8.000 7.000" preserveAspectRatio="none"><path d="M0 0H7L3.5 5.2Z" fill="#666"/></svg>
<span class="t" style="font-size:11px;font-weight:normal;color:#0c0c0c;-webkit-text-stroke:0.35px #0c0c0c;left:23px;top:-7.75px;transform:translateX(0.43px) scaleX(1.0309);">com.android.internal.policy.DecorView</span>
<span class="t" style="font-size:11px;font-weight:bold;color:#3a3a3a;left:232px;top:-7.75px;transform:translateX(0.69px) scaleX(0.9636);">Elements: 1</span>
<div style="left:0px;top:13px;width:633px;height:1px;background:#c9c9c9"></div>
</div>
<span class="t" style="font-size:11px;font-weight:normal;color:#0e0e0e;left:549px;top:535.25px;transform:translateX(0.21px) scaleX(1.0043);">[ 1 ] com.android.internal.policy.DecorView</span>
<svg style="left:496px;top:566px;" width="7" height="9" viewBox="-0.800 -0.900 7.000 9.000" preserveAspectRatio="none"><path d="M0 0V7.2L5.3 3.6Z" fill="#666"/></svg>
<span class="t" style="font-size:11px;font-weight:normal;color:#0c0c0c;-webkit-text-stroke:0.35px #0c0c0c;left:511px;top:563.25px;transform:translateX(0.40px) scaleX(1.0508);">android.widget.Toolbar</span>
<span class="t" style="font-size:11px;font-weight:bold;color:#3a3a3a;left:645px;top:563.25px;transform:translateX(0.54px) scaleX(0.9578);">Elements: 1</span>
<div style="left:488px;top:584px;width:633px;height:1px;background:#c9c9c9"></div>
<svg style="left:496px;top:595px;" width="7" height="9" viewBox="-0.800 -0.900 7.000 9.000" preserveAspectRatio="none"><path d="M0 0V7.2L5.3 3.6Z" fill="#666"/></svg>
<span class="t" style="font-size:11px;font-weight:normal;color:#0c0c0c;-webkit-text-stroke:0.35px #0c0c0c;left:511px;top:592.25px;transform:translateX(0.40px) scaleX(1.0411);">android.widget.TextView</span>
<span class="t" style="font-size:11px;font-weight:bold;color:#3a3a3a;left:652px;top:592.25px;transform:translateX(0.54px) scaleX(0.9578);">Elements: 1</span>
<div style="left:488px;top:613px;width:633px;height:1px;background:#c9c9c9"></div>
<svg style="left:496px;top:624px;" width="7" height="9" viewBox="-0.800 -0.900 7.000 9.000" preserveAspectRatio="none"><path d="M0 0V7.2L5.3 3.6Z" fill="#666"/></svg>
<span class="t" style="font-size:11px;font-weight:normal;color:#0c0c0c;-webkit-text-stroke:0.35px #0c0c0c;left:511px;top:621.25px;transform:translateX(0.38px) scaleX(1.0518);">android.widget.MultiAutoCompleteTextView</span>
<span class="t" style="font-size:11px;font-weight:bold;color:#3a3a3a;left:751px;top:621.25px;transform:translateX(0.54px) scaleX(0.9578);">Elements: 1</span>
<div style="left:488px;top:642px;width:633px;height:1px;background:#c9c9c9"></div>
<svg style="left:496px;top:653px;" width="7" height="9" viewBox="-0.800 -0.900 7.000 9.000" preserveAspectRatio="none"><path d="M0 0V7.2L5.3 3.6Z" fill="#666"/></svg>
<span class="t" style="font-size:11px;font-weight:normal;color:#0c0c0c;-webkit-text-stroke:0.35px #0c0c0c;left:511px;top:650.25px;transform:translateX(0.41px) scaleX(1.0334);">android.widget.LinearLayout</span>
<span class="t" style="font-size:11px;font-weight:bold;color:#3a3a3a;left:671px;top:650.25px;transform:translateX(0.86px) scaleX(0.9648);">Elements: 2</span>
<div style="left:488px;top:671px;width:633px;height:1px;background:#c9c9c9"></div>
<svg style="left:496px;top:682px;" width="7" height="9" viewBox="-0.800 -0.900 7.000 9.000" preserveAspectRatio="none"><path d="M0 0V7.2L5.3 3.6Z" fill="#666"/></svg>
<span class="t" style="font-size:11px;font-weight:normal;color:#0c0c0c;-webkit-text-stroke:0.35px #0c0c0c;left:511px;top:679.25px;transform:translateX(0.37px) scaleX(1.0288);">android.widget.FrameLayout</span>
<span class="t" style="font-size:11px;font-weight:bold;color:#3a3a3a;left:672px;top:679.25px;transform:translateX(0.72px) scaleX(0.9623);">Elements: 2</span>
<div style="left:488px;top:700px;width:633px;height:1px;background:#c9c9c9"></div>
<svg style="left:495px;top:712px;" width="8" height="7" viewBox="-0.900 -0.800 8.000 7.000" preserveAspectRatio="none"><path d="M0 0H7L3.5 5.2Z" fill="#666"/></svg>
<span class="t" style="font-size:11px;font-weight:normal;color:#0c0c0c;-webkit-text-stroke:0.35px #0c0c0c;left:511px;top:708.25px;transform:translateX(0.37px) scaleX(1.0413);">android.widget.EditText</span>
<span class="t" style="font-size:11px;font-weight:bold;color:#3a3a3a;left:647px;top:708.25px;transform:translateX(0.72px) scaleX(0.9571);">Elements: 1</span>
<div style="left:488px;top:729px;width:633px;height:1px;background:#c9c9c9"></div>
<div class="sel" style="left:512px;top:730px;width:609px;height:28px;"></div>
<span class="t" style="font-size:11px;font-weight:normal;color:#0e0e0e;left:549px;top:737.25px;transform:translateX(0.40px) scaleX(1.0072);">[ 1 ] android.widget.EditText</span>
<svg style="left:496px;top:768px;" width="7" height="9" viewBox="-0.800 -0.900 7.000 9.000" preserveAspectRatio="none"><path d="M0 0V7.2L5.3 3.6Z" fill="#666"/></svg>
<span class="t" style="font-size:11px;font-weight:normal;color:#0c0c0c;-webkit-text-stroke:0.35px #0c0c0c;left:511px;top:765.25px;transform:translateX(0.37px) scaleX(1.0595);">android.widget.Button</span>
<span class="t" style="font-size:11px;font-weight:bold;color:#3a3a3a;left:641px;top:765.25px;transform:translateX(0.42px) scaleX(0.9627);">Elements: 1</span>
<div style="left:488px;top:786px;width:633px;height:1px;background:#c9c9c9"></div>
<svg style="left:496px;top:797px;" width="7" height="9" viewBox="-0.800 -0.900 7.000 9.000" preserveAspectRatio="none"><path d="M0 0V7.2L5.3 3.6Z" fill="#666"/></svg>
<span class="t" style="font-size:11px;font-weight:normal;color:#0c0c0c;-webkit-text-stroke:0.35px #0c0c0c;left:511px;top:794.25px;transform:translateX(0.38px) scaleX(1.0377);">android.widget.AutoCompleteTextView</span>
<span class="t" style="font-size:11px;font-weight:bold;color:#3a3a3a;left:724px;top:794.25px;transform:translateX(0.42px) scaleX(0.9627);">Elements: 1</span>
<div style="left:488px;top:815px;width:633px;height:1px;background:#c9c9c9"></div>
<svg style="left:496px;top:826px;" width="7" height="9" viewBox="-0.800 -0.900 7.000 9.000" preserveAspectRatio="none"><path d="M0 0V7.2L5.3 3.6Z" fill="#666"/></svg>
<span class="t" style="font-size:11px;font-weight:normal;color:#0c0c0c;-webkit-text-stroke:0.35px #0c0c0c;left:511px;top:823.25px;transform:translateX(0.38px) scaleX(1.0499);">android.widget.ActionMenuView</span>
<span class="t" style="font-size:11px;font-weight:bold;color:#3a3a3a;left:693px;top:823.25px;transform:translateX(0.42px) scaleX(0.9627);">Elements: 1</span>
<div style="left:488px;top:844px;width:633px;height:1px;background:#c9c9c9"></div>
<svg style="left:496px;top:855px;" width="7" height="9" viewBox="-0.800 -0.900 7.000 9.000" preserveAspectRatio="none"><path d="M0 0V7.2L5.3 3.6Z" fill="#666"/></svg>
<span class="t" style="font-size:11px;font-weight:normal;color:#0c0c0c;-webkit-text-stroke:0.35px #0c0c0c;left:511px;top:852.25px;transform:translateX(0.28px) scaleX(1.0265);">android.view.View</span>
<span class="t" style="font-size:11px;font-weight:bold;color:#3a3a3a;left:619px;top:852.25px;transform:translateX(0.42px) scaleX(0.9610);">Elements: 2</span>
<div style="left:488px;top:873px;width:633px;height:1px;background:#c9c9c9"></div>
<div style="left:1125px;top:595px;width:6px;height:276px;background:#c8c8c6;border-radius:3px"></div>
<div class="ln" style="left:488px;top:872px;width:644px;height:1px;"></div>
<div style="left:488px;top:873px;width:644px;height:27px;background:#eeeae7"></div>
<div style="left:491px;top:873px;width:91px;height:24px;background:#c8c8c8"></div>
<span class="t" style="font-size:11px;font-weight:normal;color:#4a4a4a;left:499px;top:878.25px;transform:translateX(0.98px) scaleX(1.0407);">DOM Explorer</span>
<span class="t" style="font-size:11px;font-weight:normal;color:#4a4a4a;left:591px;top:878.25px;transform:translateX(0.08px) scaleX(0.9735);">Results</span>
<span class="t" style="font-size:11px;font-weight:normal;color:#4a4a4a;left:646px;top:878.25px;transform:translateX(0.06px) scaleX(1.1004);">Output</span>
<div class="panel" style="left:1140px;top:2px;width:470px;height:901px;"></div>
<div class="hdr" style="left:1141px;top:3px;width:465px;height:29px;"></div>
<span class="t" style="font-size:10.2px;font-weight:bold;color:#8c8c8c;text-rendering:geometricPrecision;-webkit-text-stroke:0.2px #8c8c8c;left:1148px;top:12.25px;transform:translateX(0.66px) scaleX(0.9051);">STEP BUILDER</span>
<span class="t" style="font-size:10.2px;font-weight:bold;color:#8c8c8c;text-rendering:geometricPrecision;-webkit-text-stroke:0.2px #8c8c8c;left:1148px;top:42.25px;transform:translateX(0.76px) scaleX(0.8973);">GENERAL</span>
<span class="t" style="font-size:11px;font-weight:normal;color:#3e3e3e;left:1148px;top:70.25px;transform:translateX(0.62px) scaleX(1.0458);">Common</span>
<span class="t" style="font-size:10.2px;font-weight:bold;color:#8c8c8c;text-rendering:geometricPrecision;-webkit-text-stroke:0.2px #8c8c8c;left:1148px;top:101.25px;transform:translateX(0.70px) scaleX(0.8806);">SELECTED ELEMENT</span>
<div style="left:1141px;top:121px;width:292px;height:29px;background:#fef0cf"></div>
<span class="t" style="font-size:11px;font-weight:normal;color:#3e3e3e;left:1148px;top:129.25px;transform:translateX(0.82px) scaleX(1.0422);">Actions</span>
<span class="t" style="font-size:11px;font-weight:normal;color:#3e3e3e;left:1148px;top:158.25px;transform:translateX(0.76px) scaleX(1.0450);">Verifications</span>
<span class="t" style="font-size:11px;font-weight:normal;color:#3e3e3e;left:1148px;top:187.25px;transform:translateX(0.89px) scaleX(1.0796);">Wait</span>
<div style="left:1433px;top:32px;width:1px;height:802px;background:#c9c9c9"></div>
<span class="t" style="font-size:11px;font-weight:normal;color:#3e3e3e;left:1440px;top:70.25px;transform:translateX(0.95px) scaleX(1.0523);">Set text</span>
<span class="t" style="font-size:11px;font-weight:normal;color:#3e3e3e;left:1441px;top:99.25px;transform:translateX(0.36px) scaleX(1.0418);">Tap</span>
<span class="t" style="font-size:11px;font-weight:normal;color:#3e3e3e;left:1441px;top:128.25px;transform:translateX(0.10px) scaleX(1.0218);">Swipe</span>
<span class="t" style="font-size:11px;font-weight:normal;color:#3e3e3e;left:1440px;top:157.25px;transform:translateX(0.95px) scaleX(1.0308);">Rotate</span>
<span class="t" style="font-size:11px;font-weight:normal;color:#3e3e3e;left:1440px;top:186.25px;transform:translateX(0.95px) scaleX(1.0343);">Pinch In</span>
<span class="t" style="font-size:11px;font-weight:normal;color:#3e3e3e;left:1440px;top:215.25px;transform:translateX(0.95px) scaleX(1.0303);">Pinch Out</span>
<span class="t" style="font-size:11px;font-weight:normal;color:#3e3e3e;left:1440px;top:244.25px;transform:translateX(0.89px) scaleX(1.0835);">Drag to point</span>
<span class="t" style="font-size:11px;font-weight:normal;color:#3e3e3e;left:1440px;top:273.25px;transform:translateX(0.94px) scaleX(1.0384);">Drag to displacement</span>
<div style="left:1141px;top:834px;width:465px;height:1px;background:#c9c9c9"></div>
<div style="left:1141px;top:835px;width:465px;height:37px;background:#f5f5f5"></div>
<div style="left:1141px;top:872px;width:465px;height:1px;background:#ee8300"></div>
<div style="left:1141px;top:873px;width:465px;height:27px;background:#eeeae7"></div>
<div style="left:1215px;top:873px;width:81px;height:24px;background:#ee8300"></div>
<span class="t" style="font-size:11px;font-weight:normal;color:#4a4a4a;left:1153px;top:878.25px;transform:translateX(0.21px) scaleX(1.0485);">Properties</span>
<span class="t" style="font-size:11px;font-weight:normal;color:#fff;-webkit-text-stroke:0.3px #fff;left:1224px;top:878.25px;transform:translateX(0.37px) scaleX(1.0191);">Step Builder</span>
</body></html>
